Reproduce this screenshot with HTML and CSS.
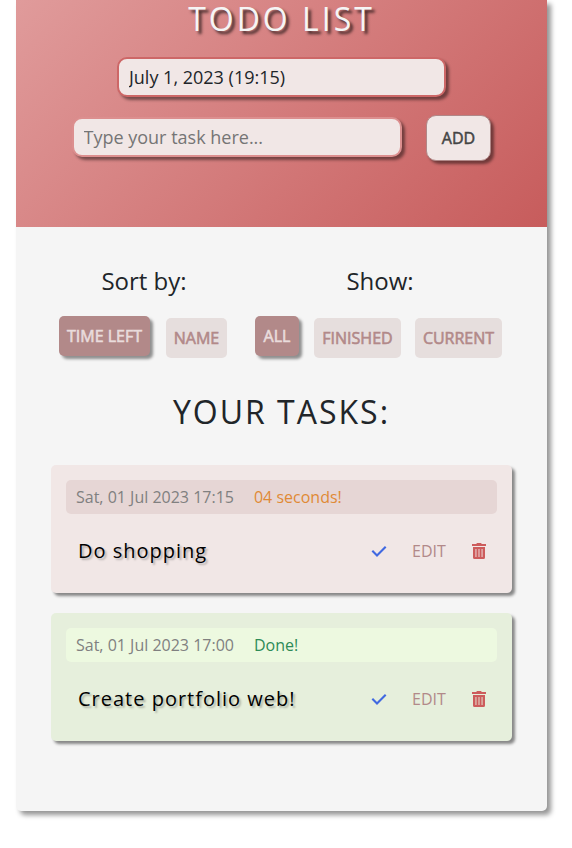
FILE: index.html
```html
<!DOCTYPE html>
<html lang="en">
<head>
<meta charset="utf-8">
<title>Todo List</title>
<link rel="stylesheet" href="styles.css">
</head>
<body>
<svg class="sprite" aria-hidden="true">
  <symbol id="check" viewBox="0 0 16 16"><path d="M1.300 7.800 L6 12.500 L14.700 3.800" fill="none" stroke="currentColor" stroke-width="2.100"/></symbol>
  <symbol id="trash" viewBox="0 0 14 16"><path fill="currentColor" fill-rule="evenodd" d="M5 0h4l.8 1H14v2H0V1h4.200zM1 4h12v10.500A1.500 1.500 0 0 1 11.500 16h-9A1.500 1.500 0 0 1 1 14.500zM3.500 6v8h.9V6zM6.550 6v8h.9V6zM9.600 6v8h.9V6z"/></symbol>
</svg>
<main class="app">
  <header class="header">
    <h1 class="title">TODO LIST</h1>
    <input class="field field-date" type="text" value="July 1, 2023 (19:15)">
    <form class="add-form">
      <input class="field" type="text" placeholder="Type your task here...">
      <button class="add" type="button">ADD</button>
    </form>
  </header>
  <section class="filters">
    <div class="group">
      <h2 class="group-title">Sort by:</h2>
      <div class="options">
        <button class="option time active">TIME LEFT</button>
        <button class="option name">NAME</button>
      </div>
    </div>
    <div class="group">
      <h2 class="group-title">Show:</h2>
      <div class="options">
        <button class="option all active">ALL</button>
        <button class="option wide">FINISHED</button>
        <button class="option wide">CURRENT</button>
      </div>
    </div>
  </section>
  <h2 class="tasks-title">YOUR TASKS:</h2>
  <ul class="tasks">
    <li class="task">
      <div class="meta"><span>Sat, 01 Jul 2023 17:15</span><span class="soon">04 seconds!</span></div>
      <div class="row">
        <span class="text">Do shopping</span>
        <svg class="check"><use href="#check"/></svg>
        <span class="edit">EDIT</span>
        <svg class="trash"><use href="#trash"/></svg>
      </div>
    </li>
    <li class="task done">
      <div class="meta"><span>Sat, 01 Jul 2023 17:00</span><span class="finished">Done!</span></div>
      <div class="row">
        <span class="text">Create portfolio web!</span>
        <svg class="check"><use href="#check"/></svg>
        <span class="edit">EDIT</span>
        <svg class="trash"><use href="#trash"/></svg>
      </div>
    </li>
  </ul>
</main>
</body>
</html>
```
FILE: styles.css
```css
* { box-sizing: border-box; }
body { margin: 0; min-height: 848px; background: #fff; color: #212529; font: 16px/24px "Open Sans", sans-serif; }
h1, h2, ul { margin: 0; padding: 0; font-weight: 400; }
button, input { font-family: inherit; }
.sprite { display: none; }
.app {
  width: 531px; height: 811px; margin-left: 16px;
  background: #f5f5f5; border-radius: 0 0 5px 5px;
  box-shadow: 4px 4px 5px rgba(0,0,0,.42);
}
.header {
  height: 227px; display: flex; flex-direction: column; align-items: center;
  background: linear-gradient(135deg, #e09b9b, #c75c5c);
}
.title {
  height: 57px; line-height: 38px; font-size: 32px; letter-spacing: 3px; color: #f5f5f5;
  text-shadow: 3px 3px 3px rgba(0,0,0,.7);
}
.field {
  width: 330px; height: 40px; padding: 0 10px; font-size: 18px; color: #212529;
  background: #f1e7e6; border: 2px solid #dc8f8f; border-radius: 10px;
  box-shadow: 3px 3px 3px rgba(0,0,0,.45); outline: none;
}
.field-date { width: 329px; border-color: #cd6767; }
.field::placeholder { color: #757575; opacity: 1; }
.add-form { display: flex; align-items: flex-start; gap: 24px; margin: 18px 1px 0 0; }
.add-form .field { margin-top: 2px; }
.add {
  width: 65px; height: 46px; padding: 0 0 0 1px; font-size: 16px; color: #444; -webkit-text-stroke: .5px #444;
  background: #f1e7e6; border: 1px solid #b08888; border-radius: 10px;
  box-shadow: 3px 3px 3px rgba(0,0,0,.45);
}
.filters { display: flex; gap: 28px; padding: 36px 0 0 43px; }
.group-title { height: 55px; line-height: 36px; font-size: 24px; text-align: center; }
.group:first-child .group-title { padding-left: 2px; }
.group:last-child .group-title { padding-left: 3px; }
.options { display: flex; gap: 14px; }
.option {
  height: 40px; padding: 0; border: 0; border-radius: 5px; font-size: 16px;
  background: #e6dedd; color: #b28989; -webkit-text-stroke: .6px currentColor;
}
.active { margin-right: 1px; background: #b28989; color: #e9dcdc; box-shadow: 3px 3px 3px rgba(0,0,0,.42); transform: translateY(-2px); }
.time { width: 91px; margin-right: 2px; }
.name { width: 61px; }
.all { width: 44px; }
.wide { width: 87px; }
.tasks-title { height: 107px; padding-top: 34px; line-height: 40px; font-size: 32px; letter-spacing: 2px; text-align: center; }
.tasks { display: grid; gap: 20px; padding: 0 35px; list-style: none; }
.task { height: 128px; padding: 15px; background: #f1e7e6; border-radius: 5px; box-shadow: 3px 3px 3px rgba(0,0,0,.45); }
.meta { display: flex; gap: 20px; height: 34px; padding: 0 10px; line-height: 34px; color: #808080; background: #e6d6d5; border-radius: 5px; }
.soon { color: #e08a35; }
.finished { color: #2e8b57; }
.done { background: #e6efdc; }
.done .meta { background: #edf9e0; }
.row { display: flex; align-items: center; height: 74px; padding: 0 11px 0 12px; }
.text { margin-right: auto; font-size: 20px; letter-spacing: 1px; color: #000; text-shadow: 2px 2px 2px rgba(0,0,0,.25); }
.check { width: 16px; height: 16px; color: #4169e1; }
.edit { width: 35px; margin: 0 25px; color: #b28989; }
.trash { width: 14px; height: 16px; color: #cd5c5c; }
```
